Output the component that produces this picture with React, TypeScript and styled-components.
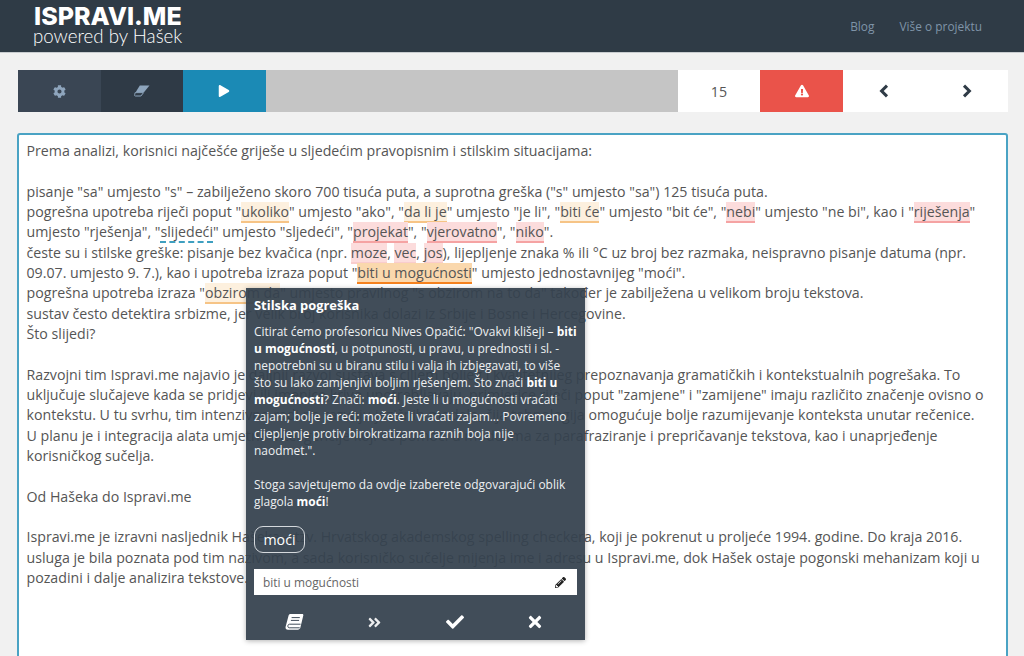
import React from "react";
import styled, { createGlobalStyle, css } from "styled-components";
import {
    FaAngleDoubleRight,
    FaCheck,
    FaCog,
    FaExclamationTriangle,
    FaPencilAlt,
    FaPlay,
    FaTimes,
} from "react-icons/fa";

const GlobalStyle = createGlobalStyle`
    html, body {
        margin: 0;
        height: 100%;
        overflow: hidden;
        background: #f1f1f1;
        font-family: "Open Sans", sans-serif;
    }
`;

const Header = styled.header`
    display: flex;
    justify-content: space-between;
    align-items: center;
    height: 53px;
    padding: 0 42px 0 33px;
    box-sizing: border-box;
    background: #2f3b46;
    border-bottom: 1px solid #c9cdd0;
`;

const Logo = styled.div`
    display: flex;
    flex-direction: column;
    color: #fff;
    margin-top: -4px;
`;

const LogoTitle = styled.span`
    font-family: Inter, sans-serif;
    font-weight: 800;
    font-size: 25px;
    line-height: 24px;
    margin-left: 1px;
`;

const LogoSub = styled.span`
    font-family: Lato, sans-serif;
    font-weight: 300;
    font-size: 18.7px;
    line-height: 17px;
`;

const Nav = styled.nav`
    display: flex;
    gap: 25px;
`;

const NavLink = styled.a`
    font-size: 11.9px;
    color: #7f94a8;
`;

const Toolbar = styled.div`
    display: grid;
    grid-template-columns: repeat(3, 82.6px) 1fr repeat(4, 82.6px);
    height: 42px;
    margin: 17px 16px 21px 18px;
`;

type CellKind = "settings" | "clear" | "play" | "progress" | "count" | "alert" | "nav";

const cellColors: Record<CellKind, string> = {
    settings: "#3a4654",
    clear: "#2f3a46",
    play: "#1b8ab5",
    progress: "#c5c5c5",
    count: "#fff",
    alert: "#ea534a",
    nav: "#fff",
};

const Cell = styled.div<{ $kind: CellKind }>`
    display: flex;
    align-items: center;
    justify-content: center;
    background: ${(p) => cellColors[p.$kind]};
    font-size: 14.2px;
    color: #555;
    ${(p) => (p.$kind === "settings" || p.$kind === "clear") && css`color: #8ea5bd;`}
    ${(p) => (p.$kind === "play" || p.$kind === "alert") && css`color: #fff;`}
`;

const Editor = styled.div`
    position: relative;
    height: 560px;
    margin: 0 16px 0 17px;
    padding: 6px 7.5px;
    box-sizing: border-box;
    background: #fff;
    border: 2px solid #4aa3c4;
    border-radius: 3px;
    color: #555;
    font-size: 14.2px;
    line-height: 20.33px;
    white-space: nowrap;
`;

const Para = styled.p`
    margin: 0 0 20.33px;
`;

type MarkKind = "style" | "strong" | "spell" | "grammar" | "plain";

const markStyles = {
    style: css`
        background: #fdf0de;
        border-bottom: 2px solid #f6c486;
    `,
    strong: css`
        background: #fad8ad;
        border-bottom: 2px solid #f5821f;
    `,
    spell: css`
        background: #fcdcdc;
        border-bottom: 2px solid #f5a3a3;
    `,
    plain: css`
        background: #fcdcdc;
        border-bottom: 2px solid #f9cccc;
    `,
    grammar: css`
        border-bottom: 2px dashed #3e9fc0;
    `,
};

const Mark = styled.span<{ $kind: MarkKind }>`
    ${(p) => markStyles[p.$kind]}
`;

const Popup = styled.div`
    position: absolute;
    left: 227px;
    top: 153px;
    width: 339px;
    height: 352px;
    padding: 8px 8px 0;
    box-sizing: border-box;
    display: flex;
    flex-direction: column;
    background: rgba(53, 66, 79, 0.94);
    box-shadow: 0 1px 5px rgba(0, 0, 0, 0.3);
    color: #eef0f2;
    font-size: 11.95px;
    line-height: 17px;
    white-space: normal;
`;

const PopupTitle = styled.div`
    font-size: 12.9px;
    line-height: 18px;
    font-weight: 700;
    color: #fff;
    margin-bottom: 9px;
`;

const PopupText = styled.div`
    width: 323px;
    white-space: nowrap;

    b {
        color: #fff;
        font-weight: 700;
    }
`;

const Suggestion = styled.button`
    align-self: flex-start;
    width: 51px;
    height: 27px;
    margin-top: 16px;
    padding: 0;
    border: 1px solid #d5d9dd;
    border-radius: 9px;
    background: transparent;
    color: #fff;
    font: 14.2px "Open Sans", sans-serif;
`;

const InputRow = styled.div`
    display: flex;
    align-items: center;
    justify-content: space-between;
    width: 323px;
    height: 26px;
    margin-top: 16px;
    padding: 0 11px 0 9px;
    box-sizing: border-box;
    background: #fff;
    color: #666;
    font-size: 11.9px;
`;

const PencilIcon = styled(FaPencilAlt)`
    color: #222;
    font-size: 11px;
`;

const Actions = styled.div`
    display: grid;
    grid-template-columns: repeat(4, 1fr);
    width: 321px;
    margin-top: 18px;
    height: 18px;
    font-size: 18px;
    color: #fff;

    & > * {
        justify-self: center;
    }
`;

const DoubleIcon = styled(FaAngleDoubleRight)`
    font-size: 15px;
    margin-top: 2px;
    opacity: 0.9;
`;

function BookIcon() {
    return (
        <svg width="19" height="18" viewBox="0 0 19 18">
            <path
                d="M5.5 1h11.7c.9 0 1.4.7 1.1 1.6l-2.9 11.9c-.3 1.4-1.3 2.2-2.6 2.2H3c-1.8 0-2.8-1.3-2.4-3L3.6 2.6C3.8 1.6 4.6 1 5.5 1z"
                fill="#fff"
            />
            <path
                d="M6.6 4.6h8.2M5.9 7.4h8.2M15.6 11.2H4.4c-1.9 0-2.1 3.6-.2 3.6h10.5"
                fill="none"
                stroke="#414d5a"
                strokeWidth="1"
            />
        </svg>
    );
}

function EraserIcon() {
    return (
        <svg width="16" height="12" viewBox="0 0 16 12">
            <path d="M5.8 0.5H15.5L10.2 7H1.8z" fill="currentColor" />
            <path d="M1.2 7.6h8.4l-2.7 3.4H1.4c-.8 0-1.2-.8-.7-1.5z" fill="none" stroke="currentColor" strokeWidth="1" />
        </svg>
    );
}

function Chevron({ flip }: { flip?: boolean }) {
    return (
        <svg width="10" height="14" viewBox="0 0 10 14" style={{ transform: flip ? "scaleX(-1)" : undefined }}>
            <path d="M8 1.6 2.6 7 8 12.4" fill="none" stroke="#2f3b46" strokeWidth="3" />
        </svg>
    );
}

export default function App(): JSX.Element {
    return (
        <>
            <GlobalStyle />
            <Header>
                <Logo>
                    <LogoTitle>ISPRAVI.ME</LogoTitle>
                    <LogoSub>powered by Hašek</LogoSub>
                </Logo>
                <Nav>
                    <NavLink>Blog</NavLink>
                    <NavLink>Više o projektu</NavLink>
                </Nav>
            </Header>

            <Toolbar>
                <Cell $kind="settings"><FaCog size={13} /></Cell>
                <Cell $kind="clear"><EraserIcon /></Cell>
                <Cell $kind="play"><FaPlay size={12} /></Cell>
                <Cell $kind="progress" />
                <Cell $kind="count">15</Cell>
                <Cell $kind="alert"><FaExclamationTriangle size={14} /></Cell>
                <Cell $kind="nav"><Chevron /></Cell>
                <Cell $kind="nav"><Chevron flip /></Cell>
            </Toolbar>

            <Editor>
                <Para>Prema analizi, korisnici najčešće griješe u sljedećim pravopisnim i stilskim situacijama:</Para>
                <Para>
                    pisanje "sa" umjesto "s" – zabilježeno skoro 700 tisuća puta, a suprotna greška ("s" umjesto "sa") 125 tisuća puta.<br />
                    pogrešna upotreba riječi poput "<Mark $kind="style">ukoliko</Mark>" umjesto "ako", "<Mark $kind="style">da li je</Mark>" umjesto "je li", "<Mark $kind="style">biti će</Mark>" umjesto "bit će", "<Mark $kind="spell">nebi</Mark>" umjesto "ne bi", kao i "<Mark $kind="spell">riješenja</Mark>"<br />
                    umjesto "rješenja", "<Mark $kind="grammar">slijedeći</Mark>" umjesto "sljedeći", "<Mark $kind="spell">projekat</Mark>", "<Mark $kind="spell">vjerovatno</Mark>", "<Mark $kind="spell">niko</Mark>".<br />
                    česte su i stilske greške: pisanje bez kvačica (npr. <Mark $kind="plain">moze</Mark>, <Mark $kind="plain">vec</Mark>, <Mark $kind="plain">jos</Mark>), lijepljenje znaka % ili °C uz broj bez razmaka, neispravno pisanje datuma (npr.<br />
                    09.07. umjesto 9. 7.), kao i upotreba izraza poput "<Mark $kind="strong">biti u mogućnosti</Mark>" umjesto jednostavnijeg "moći".<br />
                    pogrešna upotreba izraza "<Mark $kind="style">obzirom da</Mark>" umjesto pravilnog "s obzirom na to da" također je zabilježena u velikom broju tekstova.<br />
                    sustav često detektira srbizme, jer velik broj korisnika dolazi iz Srbije i Bosne i Hercegovine.<br />
                    Što slijedi?
                </Para>
                <Para>
                    Razvojni tim Ispravi.me najavio je daljnji razvoj sustava s ciljem boljeg i kvalitetnijeg prepoznavanja gramatičkih i kontekstualnih pogrešaka. To<br />
                    uključuje slučajeve kada se pridjevi ili imenice krivo upotrebljavaju, primjerice riječi poput "zamjene" i "zamijene" imaju različito značenje ovisno o<br />
                    kontekstu. U tu svrhu, tim intenzivno radi na razvoju jezičnih modela, čija tehnologija omogućuje bolje razumijevanje konteksta unutar rečenice.<br />
                    U planu je i integracija alata umjetne inteligencije koji će pomoći u modulima za parafraziranje i prepričavanje tekstova, kao i unaprjeđenje<br />
                    korisničkog sučelja.
                </Para>
                <Para>Od Hašeka do Ispravi.me</Para>
                <Para>
                    Ispravi.me je izravni nasljednik Hašeka – tzv. Hrvatskog akademskog spelling checkera, koji je pokrenut u proljeće 1994. godine. Do kraja 2016.<br />
                    usluga je bila poznata pod tim nazivom, a sada korisničko sučelje mijenja ime i adresu u Ispravi.me, dok Hašek ostaje pogonski mehanizam koji u<br />
                    pozadini i dalje analizira tekstove.
                </Para>

                <Popup>
                    <PopupTitle>Stilska pogreška</PopupTitle>
                    <PopupText>
                        Citirat ćemo profesoricu Nives Opačić: "Ovakvi klišeji – <b>biti</b><br />
                        <b>u mogućnosti</b>, u potpunosti, u pravu, u prednosti i sl. -<br />
                        nepotrebni su u biranu stilu i valja ih izbjegavati, to više<br />
                        što su lako zamjenjivi boljim rješenjem. Što znači <b>biti u</b><br />
                        <b>mogućnosti</b>? Znači: <b>moći</b>. Jeste li u mogućnosti vraćati<br />
                        zajam; bolje je reći: možete li vraćati zajam... Povremeno<br />
                        cijepljenje protiv birokratizama raznih boja nije<br />
                        naodmet.".<br />
                        <br />
                        Stoga savjetujemo da ovdje izaberete odgovarajući oblik<br />
                        glagola <b>moći</b>!
                    </PopupText>
                    <Suggestion>moći</Suggestion>
                    <InputRow>
                        biti u mogućnosti
                        <PencilIcon />
                    </InputRow>
                    <Actions>
                        <BookIcon />
                        <DoubleIcon />
                        <FaCheck />
                        <FaTimes />
                    </Actions>
                </Popup>
            </Editor>
        </>
    );
}
